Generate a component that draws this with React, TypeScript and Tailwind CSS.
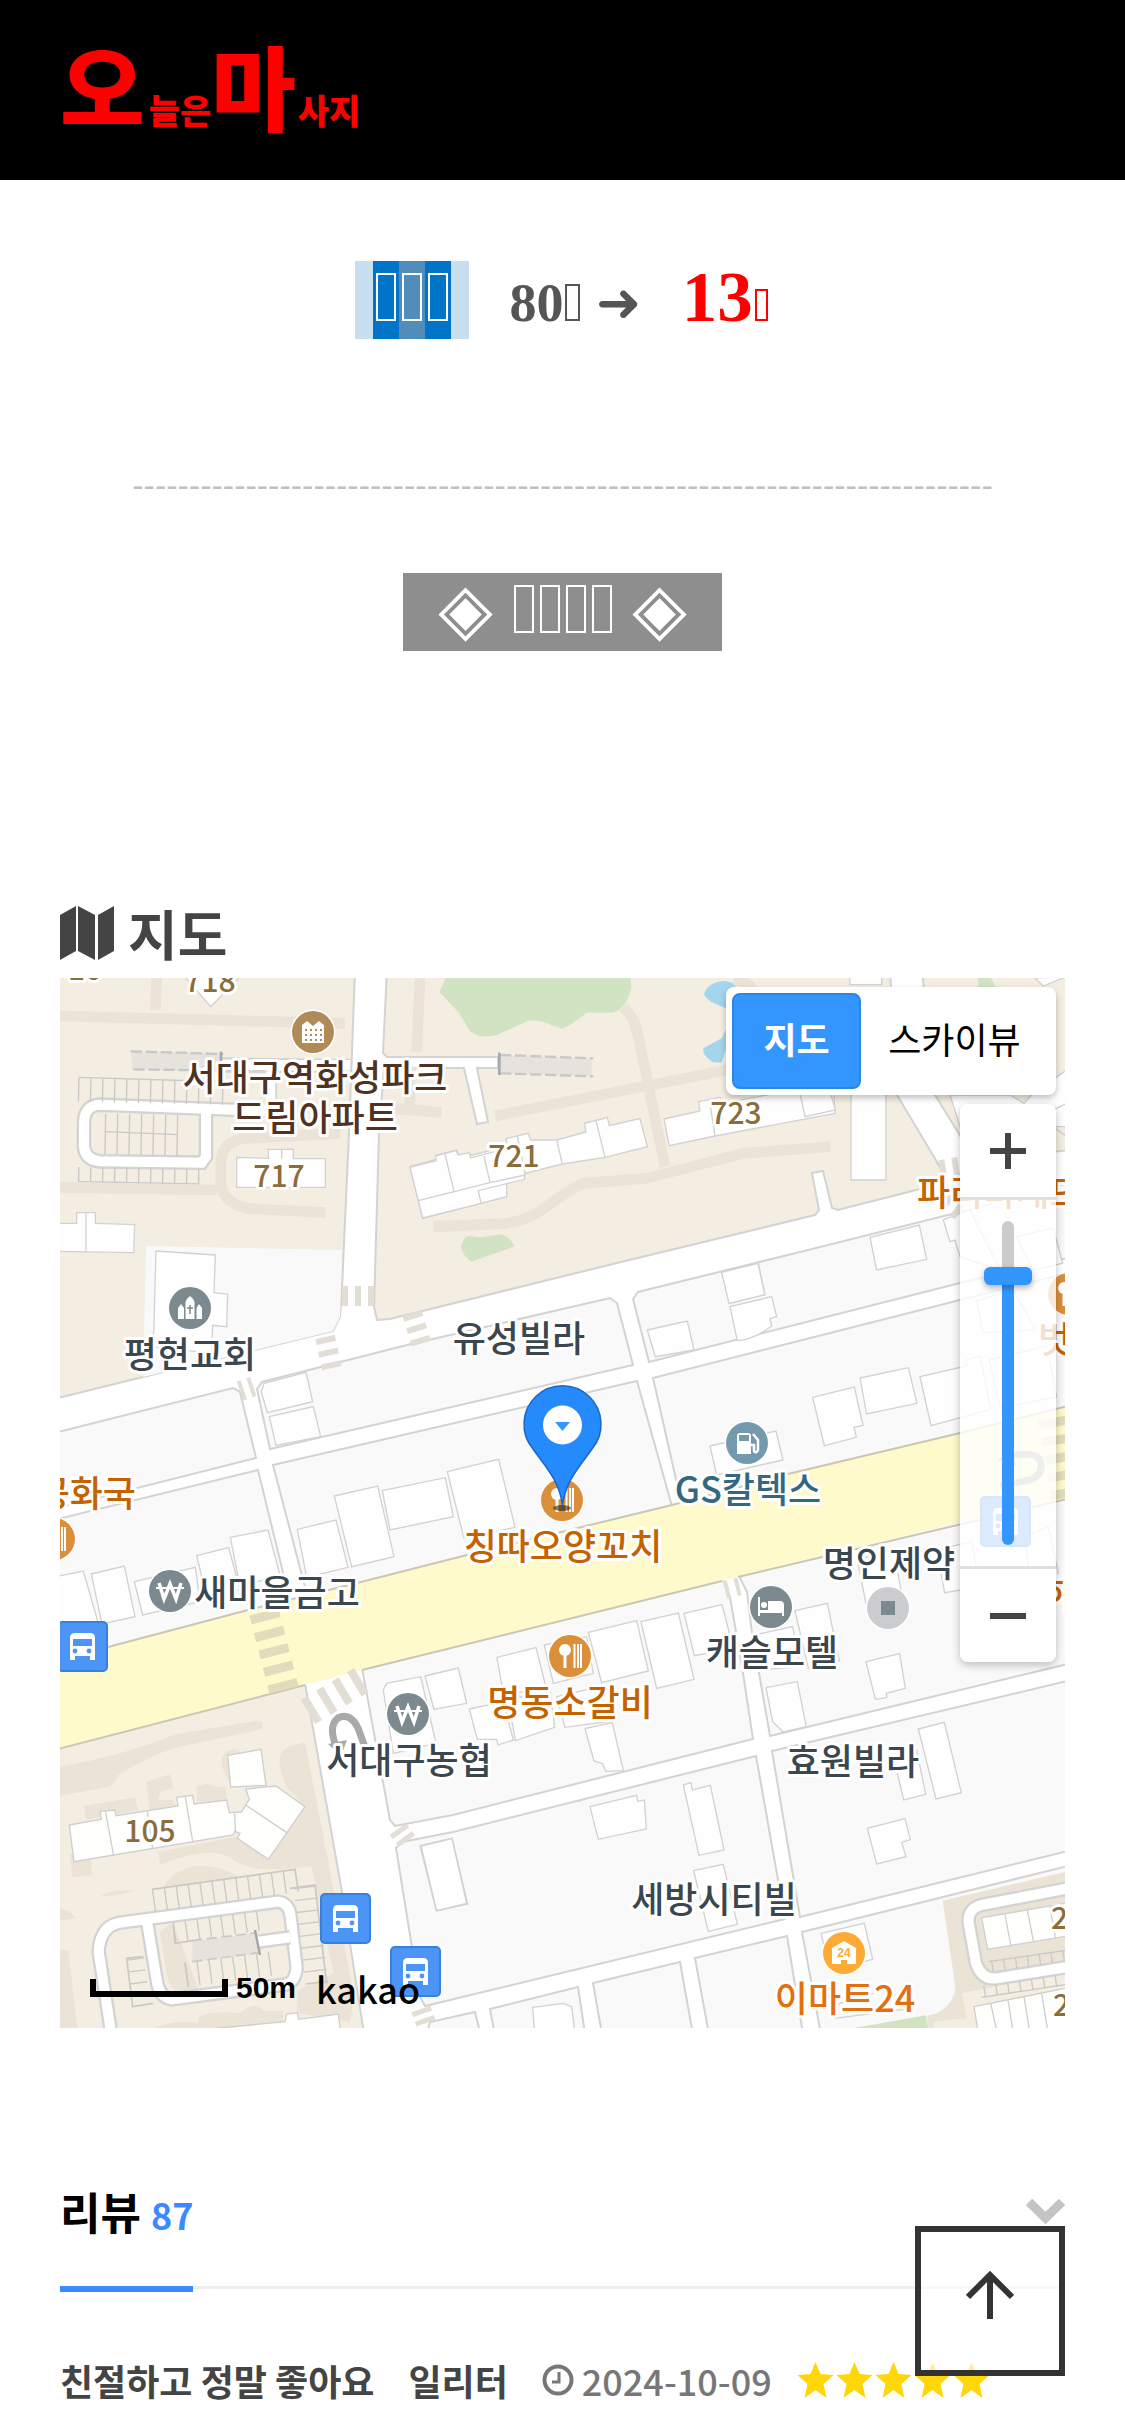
import { useState } from 'react';
import type { ReactNode } from 'react';

type Label = { text: string; x: number; y: number; color: string; size?: number; anchor?: 'start' | 'middle' | 'end' };

const BROWN = '#4f3222';
const OCHRE = '#8a6d3b';
const SLATE = '#3b474f';
const ORANGE = '#c46200';

const labels: Label[] = [
  { text: '10', x: 84, y: 979, color: OCHRE, size: 30 },
  { text: '718', x: 209, y: 991, color: OCHRE, size: 30 },
  { text: '717', x: 278, y: 1186, color: OCHRE, size: 30 },
  { text: '721', x: 513, y: 1166, color: OCHRE, size: 30 },
  { text: '723', x: 735, y: 1123, color: OCHRE, size: 30 },
  { text: '105', x: 149, y: 1841, color: OCHRE, size: 30 },
  { text: '201', x: 1050, y: 1928, color: OCHRE, size: 30, anchor: 'start' },
  { text: '202', x: 1052, y: 2015, color: OCHRE, size: 30, anchor: 'start' },
  { text: '서대구역화성파크', x: 314, y: 1090, color: BROWN },
  { text: '드림아파트', x: 314, y: 1130, color: BROWN },
  { text: '유성빌라', x: 518, y: 1351, color: SLATE },
  { text: '평현교회', x: 189, y: 1367, color: SLATE },
  { text: '새마을금고', x: 276, y: 1605, color: SLATE },
  { text: '명인제약', x: 888, y: 1576, color: SLATE },
  { text: '캐슬모텔', x: 771, y: 1665, color: SLATE },
  { text: '서대구농협', x: 408, y: 1773, color: SLATE },
  { text: '효원빌라', x: 852, y: 1774, color: SLATE },
  { text: '세방시티빌', x: 713, y: 1912, color: SLATE },
  { text: '공화국', x: 135, y: 1506, color: ORANGE, anchor: 'end' },
  { text: '파리바게뜨', x: 916, y: 1205, color: ORANGE, anchor: 'start' },
  { text: '벗', x: 1037, y: 1352, color: ORANGE, anchor: 'start' },
  { text: '하', x: 1041, y: 1605, color: ORANGE, anchor: 'start' },
  { text: '칭따오양꼬치', x: 562, y: 1559, color: ORANGE },
  { text: '명동소갈비', x: 569, y: 1715, color: ORANGE },
  { text: 'GS칼텍스', x: 747, y: 1502, color: '#34687f' },
  { text: '이마트24', x: 844, y: 2011, color: '#e3700f' },
];

// city blocks; whatever is left between them reads as street
const grayBlocks = [
  '50,1434 233,1388 240,1392 256,1458 50,1510',
  '50,1521 258,1470 290,1601 50,1680',
  '257,1389 262,1382 407,1345 610,1298 617,1303 633,1365 270,1449',
  '273,1465 637,1381 673,1510 311,1610',
  '633,1299 638,1292 800,1252 960,1212 1080,1180 1080,1255 960,1283 649,1362',
  '653,1378 960,1300 1080,1270 1080,1410 683,1510',
  '362,1668 722,1578 730,1597 743,1673 753,1739 453,1815 395,1826 390,1820',
  '738,1574 1080,1492 1080,1661 770,1736 752,1633 747,1592',
  '396,1848 402,1842 453,1832 756,1756 785,1919 425,2006 420,1997',
  '772,1751 1080,1678 1080,1848 800,1917',
  '425,2040 430,2022 475,2012 482,2040',
  '490,2009 578,1987 586,2040 496,2040',
  '593,1983 680,1962 694,2040 603,2040',
  '695,1958 787,1936 804,2040 710,2040',
  '802,1932 1080,1863 1080,2040 822,2040',
];

const sandBlocks = [
  '50,970 355,970 352,1053 349,1133 342,1288 340,1317 333,1331 143,1377 50,1400',
  '387,970 383,1053 387,1057 498,1057 498,1068 477,1068 488,1122 477,1124 464,1068 384,1068 379,1133 374,1307 377,1320 390,1319 617,1263 815,1215 819,1210 812,1173 823,1171 832,1208 838,1210 920,1189 943,1172 897,1095 890,970',
  '922,970 935,1095 975,1160 1080,1149 1080,970',
  '50,1740 305,1683 342,1892 365,2040 50,2040',
];

type Sheet = { x: number; y: number; walks?: string[]; houses?: string[]; lines?: string[] };

// detail sheets are surveyed at three units to the pixel
const sheets: Sheet[] = [
  {
    x: 40, y: 880,
    walks: ['M60 408 L915 430', 'M350 294 L346 390', 'M1140 294 L1130 515', 'M60 922 L530 930', 'M900 760 L620 775 Q545 780 542 850 V910 Q545 965 620 985 L857 998', 'M1110 560 V680', 'M1060 685 L1205 698', 'M1180 1038 H1260'],
    houses: [
      'M430 285 L512 380 L605 285 Z',
      'M590 832 L685 835 V808 H760 V836 H856 V922 H590 Z',
      'M50 1030 H110 V998 H166 V1030 L284 1034 L281 1118 L50 1114 Z',
      'M348 1113 L526 1125 L522 1238 L563 1242 L560 1340 L518 1336 L515 1420 L340 1400 Z',
      'M1110 860 L1190 838 L1188 826 L1250 810 L1260 834 L1400 800 V950 L1148 1015 Z',
    ],
    lines: ['M725 808 V836', 'M138 998 V1116', 'M1214 822 L1242 935', 'M1138 962 L1300 925'],
  },
  {
    x: 400, y: 960,
    walks: ['M285 468 L980 330', 'M670 140 Q705 175 715 230 L795 620', 'M102 800 L320 790 Q390 780 440 740 T550 670 L740 655 L1030 580 L1290 560', 'M1000 60 Q1040 60 1060 90'],
    houses: [
      'M30 622 L108 602 L106 588 L168 572 L175 585 L208 578 L212 594 L322 565 L318 536 L385 520 L392 540 L470 540 L558 516 L553 490 L622 473 L628 497 L720 476 L742 560 L615 592 L487 612 L375 640 L373 658 L235 692 L243 730 L68 774 Z',
      'M792 477 L900 453 L896 425 L960 412 L970 430 L1100 405 L1300 360 L1305 460 L945 528 L808 557 Z',
      'M966 937 L1075 910 L1095 1004 L988 1030 Z',
      'M990 1040 L1115 1010 L1130 1070 L1110 1076 L1115 1098 Q1060 1140 1012 1142 Z',
      'M742 1110 L862 1083 L882 1170 L766 1190 Z',
    ],
    lines: ['M135 582 L162 695', 'M252 588 L270 668', 'M55 722 L270 668 L375 645', 'M352 528 L375 640', 'M470 540 L487 612', 'M588 482 L615 592', 'M928 418 L945 528'],
  },
  {
    x: 720, y: 960,
    houses: [
      'M240 400 H332 L346 450 L255 470 Z', 'M393 400 H498 V660 H393 Z', 'M390 40 H485 V74 H390 Z', 'M450 832 L598 795 L620 898 L470 930 Z',
      'M5 937 L114 910 L134 1004 L27 1030 Z', 'M670 780 L750 750 L840 930 L720 890 L705 840 L690 845 Z', 'M890 830 L1000 805 L1028 910 L940 930 Z',
      'M690 405 L870 405 L912 430 L940 400 L1040 330 V500 L720 500 Z', 'M945 54 L970 78 L1040 50 Z', 'M770 1022 L880 990 L945 1110 L790 1118 Z',
    ],
    lines: ['M1040 430 L960 470 L1040 530'],
  },
  {
    x: 40, y: 1280,
    houses: [
      'M672 310 L798 277 L818 365 L682 398 L664 335 Z', 'M688 410 L820 380 L842 470 L708 496 Z',
      'M883 648 L1013 618 L1062 830 L935 860 Z', 'M1027 632 L1216 593 L1240 710 L1050 750 Z', 'M772 748 L888 720 L924 862 L800 892 Z',
      'M571 772 L684 750 L720 885 L600 920 Z', 'M470 827 L566 803 L600 930 L500 950 Z', 'M283 905 L466 862 L480 965 L308 1005 Z', 'M154 882 L253 858 L285 1010 L186 1032 Z', 'M40 892 L130 873 L175 1030 L60 1060 Z',
    ],
  },
  {
    x: 400, y: 1320,
    houses: [
      'M142 455 L296 418 L345 622 L192 655 Z', 'M930 378 L1128 333 L1149 420 L950 465 Z',
      'M565 937 L710 902 L745 1053 L605 1088 Z', 'M723 905 L835 879 L882 1078 L770 1105 Z', 'M852 880 L966 854 L1000 985 L883 1007 Z',
      'M291 1012 L408 983 L440 1110 L310 1120 Z', 'M433 975 L560 950 L580 1060 L460 1090 Z', 'M78 1068 L174 1045 L198 1148 L102 1168 Z', 'M-30 1090 L62 1072 L105 1265 L0 1280 Z',
      'M208 1167 L310 1145 L340 1260 L294 1275 L290 1258 H232 Z', 'M325 1140 L450 1110 L464 1222 L346 1262 Z', 'M470 1130 L600 1100 L620 1205 L495 1222 Z',
    ],
  },
  {
    x: 720, y: 1320,
    houses: [
      'M278 232 L403 201 L429 316 L402 322 L409 352 L313 377 Z', 'M420 174 L565 143 L591 250 L440 282 Z', 'M600 170 L740 138 L738 120 L780 108 L812 268 L633 317 Z', 'M808 120 L980 78 L1010 230 L842 265 Z',
      'M225 872 L322 850 L358 1022 L265 1045 Z', 'M100 946 L218 920 L240 1040 L120 1050 Z', 'M412 720 L520 690 L545 820 L438 850 Z', 'M650 690 L755 665 L780 800 L674 818 Z', 'M915 650 L985 620 L1015 760 L930 780 Z',
      'M438 1025 L539 1001 L556 1105 L499 1120 L500 1132 L466 1138 Z', 'M138 1103 L232 1085 L259 1220 L190 1236 L158 1205 Z',
    ],
  },
  {
    x: 400, y: 1660,
    houses: [
      'M555 206 L637 188 L670 332 L617 334 L608 311 L582 303 Z', 'M570 440 L710 406 L713 424 L733 420 L739 507 L595 538 Z', 'M850 375 L873 368 L877 390 L931 376 L972 570 L897 586 Z',
      'M881 632 L970 613 L1012 793 L925 814 Z', 'M60 557 L156 535 L203 732 L109 753 Z', 'M398 1042 L490 1030 L515 1040 L525 1120 H404 Z',
    ],
    lines: ['M535 424 L560 414', 'M745 368 L770 362'],
  },
  {
    x: 720, y: 1660,
    houses: [
      'M595 207 L673 187 L724 398 L648 417 Z', 'M520 290 L590 270 L617 403 L551 420 Z', 'M442 505 L555 476 L571 539 L545 547 L558 590 L470 612 Z',
      'M303 820 L433 790 L458 898 L330 930 Z',
    ],
    lines: ['M330 1040 L460 1000', 'M345 1075 L550 1048'],
  },
  {
    x: 40, y: 1640,
    houses: ['M1030 150 L1040 130 L1142 110 L1188 310 L1060 340 Z', 'M1155 108 L1255 84 L1280 190 L1182 208 Z', 'M1143 618 L1236 596 L1280 790 L1190 812 Z'],
  },
];

const Round = ({ x, y, fill, children }: { x: number; y: number; fill: string; children?: ReactNode }) => (
  <g transform={`translate(${x} ${y})`}>
    <circle r="22.5" fill="#fff" />
    <circle r="21" fill={fill} />
    {children}
  </g>
);

const Food = ({ x, y }: { x: number; y: number }) => (
  <Round x={x} y={y} fill="#da8f3a">
    <circle cx="-5" cy="-6" r="6" fill="#fff" />
    <path d="M-5 -4 V12" stroke="#fff" strokeWidth="3" />
    <path d="M4.5 -12 V12 M8 -12 V12 M11 -12 V12" stroke="#fff" strokeWidth="2" />
  </Round>
);

const Won = ({ x, y }: { x: number; y: number }) => (
  <Round x={x} y={y} fill="#7c898f">
    <path d="M-11 -8 L-6 8 L0 -7 L6 8 L11 -8" fill="none" stroke="#fff" strokeWidth="3.5" />
    <path d="M-14 -3 H14" stroke="#fff" strokeWidth="2" />
  </Round>
);

const Bus = ({ x, y }: { x: number; y: number }) => (
  <g transform={`translate(${x} ${y})`}>
    <rect x="1" y="1" width="49" height="49" rx="4" fill="#4c95f5" stroke="#3680de" strokeWidth="2" />
    <path d="M13 39 V17 Q13 12 18 12 H33 Q38 12 38 17 V39 H33 V35 H18 V39 Z" fill="#fff" />
    <rect x="16" y="18" width="19" height="7" fill="#4c95f5" />
    <circle cx="18" cy="30" r="2.4" fill="#4c95f5" />
    <circle cx="32" cy="30" r="2.4" fill="#4c95f5" />
  </g>
);

const Lane = ({ d, width = 36 }: { d: string; width?: number }) => (
  <>
    <path d={d} fill="none" stroke="#d3d3d3" strokeWidth={width + 8} />
    <path d={d} fill="none" stroke="#fff" strokeWidth={width - 6} />
  </>
);

const CityMap = () => (
  <svg viewBox="60 978 1005 1050" preserveAspectRatio="xMidYMid slice" className="block h-full w-full" role="img" aria-label="지도">
    <rect x="0" y="900" width="1200" height="1200" fill="#fff" />
    {sandBlocks.map((p) => <polygon key={p} points={p} fill="#f4ede1" stroke="#d3d3d3" strokeWidth="2" />)}
    <polygon points="146,1246 342,1250 340,1317 333,1331 143,1377" fill="#f9f9f9" />
    {grayBlocks.map((p) => <polygon key={p} points={p} fill="#f9f9f9" stroke="#d3d3d3" strokeWidth="2" />)}

    {/* greens and ponds */}
    <g transform="translate(400 960) scale(.33333)">
      <path d="M140 50 L118 95 L178 160 L210 213 Q240 240 295 223 L385 182 Q410 178 440 190 L485 206 Q505 202 560 158 H640 Q675 150 694 85 L692 50 Z" fill="#d1e3c2" />
      <path d="M183 860 Q188 835 205 828 L245 832 L305 823 Q335 835 342 860 L215 905 Q190 890 183 860 Z" fill="#d1e3c2" />
      <path d="M912 102 Q925 65 975 63 Q1010 68 1010 90 V150 L975 143 Q920 125 912 102 Z" fill="#a3d6ec" />
      <path d="M980 205 L965 235 L910 265 Q905 285 938 306 L965 308 L975 275 L1010 260 V200 Z" fill="#a3d6ec" />
      <path d="M1735 50 H1770 L1790 85 H1735 Z" fill="#d1e3c2" />
    </g>

    {/* estate in the south west corner */}
    <g transform="translate(40 1640) scale(.33333)">
      <g fill="#ebe3d6">
        <path d="M60 380 Q240 350 410 282 L650 242 Q675 245 665 268 L420 320 Q350 335 235 405 Q220 440 200 442 L60 467 Z" />
        <path d="M795 308 Q735 315 720 345 Q712 380 740 440 L795 500 L685 658 L590 590 L355 635 L360 675 Q520 610 580 660 Q640 705 815 678 L880 1000 L775 1050 L770 1120 L930 1145 Q945 1080 930 1000 Z" />
        <path d="M318 425 L390 403 L402 450 Q355 440 355 480 L400 480 L410 500 L330 515 Z" />
        <path d="M470 440 L500 432 Q540 445 555 440 L562 478 L470 485 Z" />
        <path d="M132 498 L285 472 L295 510 L138 540 Z" />
        <path d="M90 640 H150 L157 705 L97 712 Z" />
        <path d="M370 740 Q400 690 470 678 Q540 675 600 712 L340 748 Z" />
        <path d="M180 770 Q210 745 290 752 Q240 765 180 770 Z" />
        <path d="M60 805 Q100 815 108 835 L60 842 Z" />
        <path d="M60 930 L85 930 L112 1164 H60 Z" />
        <path d="M345 1164 Q390 1140 475 1150 V1130 Q530 1110 600 1120 Q640 1080 670 1112 H730 V1150 L480 1170 Z" />
        <path d="M545 350 Q570 315 600 335 L575 430 Q540 390 545 350 Z" />
        <path d="M360 880 Q370 860 400 850 L480 1060 Q390 1080 380 1000 Z" />
      </g>
      <Lane d="M212 1170 L176 935 Q180 850 255 846 L715 785 Q748 790 752 830 L770 985 Q765 1025 740 1033 L395 1078 Q355 1070 350 1020 L322 850" />
      <Lane d="M655 905 L750 892" />
      <path d="M457 905 L650 878 L660 940 L457 965 Z" fill="#e7e2dc" />
      <g fill="none" stroke="#c9c9c6" strokeWidth="5">
        <path d="M336 748 L765 688 L775 755 M400 850 L405 910 L460 902 M435 968 L445 1040 M310 950 L260 955 L278 1100 L340 1090 M750 745 L825 735 L860 1030" />
        <path d="M340 782 L765 722" strokeWidth="70" strokeDasharray="4 32" />
        <path d="M402 878 L660 842" strokeWidth="60" strokeDasharray="4 32" />
        <path d="M438 1005 L700 970" strokeWidth="72" strokeDasharray="4 32" />
        <path d="M795 740 L830 1030" strokeWidth="68" strokeDasharray="4 32" />
        <path d="M287 955 L305 1095" strokeWidth="50" strokeDasharray="4 32" />
        <path d="M457 902 L650 878 M457 965 L660 938" strokeDasharray="30 14" />
        <path d="M645 870 L660 945" stroke="#a5a5a5" strokeWidth="7" />
      </g>
      <g fill="#fefefd" stroke="#cfcfcf" strokeWidth="4">
        <path d="M563 346 L663 328 L678 436 L572 441 Z" />
        <path d="M88 555 L184 538 L180 514 L224 510 L228 527 L414 498 L410 472 L458 466 L462 492 L560 480 L568 518 L604 516 L628 478 L617 447 L708 438 L795 500 L685 658 L592 595 L600 580 L584 574 L580 585 L102 665 Z" />
        <path d="M196 512 L221 648 M436 470 L458 605 M584 520 L586 575 M617 495 L740 578 M322 515 L338 625" fill="none" />
        <path d="M480 1170 L735 1145 L740 1122 L772 1118 L776 1138 L895 1122 L902 1175 Z" />
      </g>
    </g>

    {/* estate in the south east corner */}
    <g transform="translate(720 1660) scale(.33333)">
      <path d="M668 722 L1060 630 V1120 H620 L622 1068 Q700 1050 706 980 Z" fill="#ebe3d6" />
      <path d="M725 1000 L1060 930 V1120 H640 V1085 L740 1075 Z" fill="#f4ede1" />
      <path d="M380 1108 L618 1066 L624 1120 H380 Z" fill="#d1e3c2" />
      <Lane d="M1060 682 L800 732 Q735 740 748 800 L768 910 Q785 960 830 955 L1060 918" />
      <g fill="#fefefd" stroke="#cfcfcf" strokeWidth="4">
        <path d="M785 773 L1060 726 V825 L803 868 Z M855 762 L872 855 M922 750 L940 843 M990 740 L1006 832" />
        <path d="M762 1040 L1060 980 V1120 H775 Z M812 1030 L832 1120 M864 1020 L880 1120 M912 1010 L930 1120 M965 1000 L982 1105" />
      </g>
      <g fill="none" stroke="#c9c9c6" strokeWidth="4">
        <path d="M806 905 L1060 868 M785 1012 L1060 970" />
        <path d="M815 918 L1060 885" strokeWidth="34" strokeDasharray="4 32" />
        <path d="M792 995 L1060 955" strokeWidth="34" strokeDasharray="4 32" />
      </g>
    </g>

    {/* car park in the north west */}
    <g transform="translate(40 880) scale(.33333)">
      <path d="M275 515 L545 520 V575 L275 568 Z" fill="#e7e2dc" />
      <path d="M272 514 L550 522 M280 568 L680 574" fill="none" stroke="#c6c8ca" strokeWidth="7" strokeDasharray="34 11" />
      <path d="M545 535 L930 540 M545 575 H680 M710 575 H925 M708 575 V690" fill="none" stroke="#d3d3d3" strokeWidth="6" />
      <path d="M545 540 H930 V570 H545 Z" fill="#fff" />
      <path d="M543 515 V560" stroke="#a5a9ac" strokeWidth="8" />
      <Lane d="M600 690 L180 674 Q132 676 132 730 V800 Q135 840 180 844 L485 848 L498 830 V700" />
      <path d="M692 575 V680 Q690 695 600 690" fill="none" stroke="#fff" strokeWidth="28" />
      <g fill="none" stroke="#c9c9c6" strokeWidth="4">
        <path d="M116 592 L580 606 M195 755 L412 764 M116 905 L476 912 M476 865 V912" />
        <path d="M114 630 L580 640" strokeWidth="70" strokeDasharray="4 32" />
        <path d="M194 762 L416 766" strokeWidth="122" strokeDasharray="4 32" />
        <path d="M114 884 L476 890" strokeWidth="46" strokeDasharray="4 32" />
      </g>
    </g>
    <g transform="translate(400 960) scale(.33333)">
      <path d="M300 287 L575 295 V347 L300 340 Z" fill="#e7e2dc" />
      <path d="M300 285 L580 295 M300 340 L580 349" fill="none" stroke="#c6c8ca" strokeWidth="7" strokeDasharray="34 11" />
      <path d="M298 278 V345" stroke="#a5a9ac" strokeWidth="8" />
    </g>

    {sheets.map((s) => (
      <g key={`${s.x}-${s.y}`} transform={`translate(${s.x} ${s.y}) scale(.33333)`}>
        {s.walks?.map((d) => <path key={d} d={d} fill="none" stroke="#ebe3d6" strokeWidth="32" />)}
        {s.houses?.map((d) => <path key={d} d={d} fill="#fefefe" stroke="#d2d2d2" strokeWidth="4" />)}
        {s.lines?.map((d) => <path key={d} d={d} fill="none" stroke="#d2d2d2" strokeWidth="4" />)}
      </g>
    ))}

    {/* main road */}
    <polygon points="50,1662 108,1647 248,1610 357,1583 467,1555 672,1505 788,1474 960,1433 1080,1403 1080,1496 960,1522 800,1561 738,1577 722,1581 460,1646 362,1670 305,1685 50,1751" fill="#fefacb" />
    <path d="M50 1662 L108 1647 L248 1610 L357 1583 L467 1555 L672 1505 L788 1474 L960 1433 L1080 1403 M50 1751 L305 1685 M362 1670 L722 1581 M738 1577 L1080 1496" fill="none" stroke="#cdc6b4" strokeWidth="2" />

    {/* crossings */}
    <g fill="none" stroke="#e2ddd5" strokeWidth="20" strokeDasharray="6 7">
      <path d="M342 1296 H374" />
      <path d="M325 1337 L332 1368" />
      <path d="M412 1313 L422 1346" />
      <path d="M240 1391 L258 1385" strokeDasharray="4 6" />
      <path d="M398 1829 L408 1843" strokeDasharray="5 5" />
      <path d="M421 2009 L427 2026" strokeDasharray="5 5" />
      <path d="M940 1170 L965 1166 M945 1200 L962 1212" />
      <path d="M725 1590 L741 1586" strokeDasharray="4 7" strokeWidth="18" />
    </g>
    <path d="M264 1612 L284 1690" fill="none" stroke="#e2dcbc" strokeWidth="30" strokeDasharray="9 9" />
    <path d="M1052 1418 L1066 1500" fill="none" stroke="#e2dcbc" strokeWidth="28" strokeDasharray="9 9" />
    <path d="M308 1712 L368 1676" fill="none" stroke="#e2ddd5" strokeWidth="28" strokeDasharray="8 10" />

    {/* u-turn arrows */}
    <path d="M366 1750 L358 1728 Q350 1712 338 1718 Q328 1726 336 1746" fill="none" stroke="#a9a9a9" strokeWidth="7" />
    <path d="M328 1744 L347 1740 L341 1756 Z" fill="#a9a9a9" />
    <path d="M1000 1486 L1030 1480 Q1045 1474 1040 1460 Q1034 1450 1005 1457" fill="none" stroke="#a9a9a9" strokeWidth="7" />
    <path d="M998 1460 L1012 1448 L1016 1466 Z" fill="#a9a9a9" />

    <Bus x={57} y={1621} />
    <Bus x={320} y={1893} />
    <Bus x={390} y={1946} />
    <Bus x={980} y={1496} />

    <Round x={313} y={1032} fill="#b08b58">
      <path d="M-11 -7 L-6 -11 L0 -6 L6 -11 L11 -7 V11 H-11 Z" fill="#fff" />
      <path d="M-8 -2 H9 M-8 3 H9 M-8 8 H9" stroke="#b08b58" strokeWidth="2" strokeDasharray="2 3" />
    </Round>
    <Round x={190} y={1308} fill="#7c898f">
      <path d="M-12 11 V0 L-9 -4 L-6 0 V11 Z M-4.500 11 V-6 Q-4 -9 0 -12 Q4 -9 4.500 -6 V11 Z M6.500 11 V0 L9 -4 L12 0 V11 Z" fill="#fff" />
      <path d="M0 -3 V6 M-3 0 H3" stroke="#7c898f" strokeWidth="1.500" />
    </Round>
    <Won x={170} y={1591} />
    <Won x={408} y={1714} />
    <Food x={562} y={1500} />
    <Food x={570} y={1656} />
    <Food x={54} y={1539} />
    <Food x={1069} y={1294} />
    <Round x={747} y={1443} fill="#7399ac">
      <path d="M-10 11 V-7 Q-10 -10 -7 -10 H1 Q4 -10 4 -7 V11 Z" fill="#fff" />
      <rect x="-8" y="-8" width="10" height="6" fill="#7399ac" />
      <path d="M4 2 H7 V8 Q9 11 11 7 V-3 L6 -9" fill="none" stroke="#fff" strokeWidth="2.500" />
    </Round>
    <Round x={771} y={1607} fill="#7c898f">
      <path d="M-13 -10 H-11 V3 H13 V9 H11 V6 H-11 V9 H-13 Z M-3 3 V-6 H9 Q13 -6 13 -2 V3 Z" fill="#fff" />
      <circle cx="-7" cy="-2" r="3" fill="#fff" />
    </Round>
    <Round x={888} y={1608} fill="#cbccd0">
      <rect x="-7" y="-7" width="14" height="14" fill="#7c898f" />
    </Round>
    <Round x={844} y={1953} fill="#fdab35">
      <path d="M-12 11 V-5 L0 -12 L12 -5 V11 H3 V7 H-3 V11 Z" fill="#fff" />
      <text y="4" textAnchor="middle" fontSize="12" fill="#fdab35" className="font-['Liberation_Sans',sans-serif] font-bold">24</text>
    </Round>

    <g transform="translate(1 1)">
      {labels.map((l) => (
        <text
          key={`${l.text}-${l.x}`}
          x={l.x}
          y={l.y}
          fill={l.color}
          fontSize={l.size ?? 36}
          textAnchor={l.anchor ?? 'middle'}
          stroke="#fff"
          strokeWidth="6"
          strokeLinejoin="round"
          paintOrder="stroke"
          className="font-['Noto_Sans_CJK_KR',sans-serif] font-medium"
        >
          {l.text}
        </text>
      ))}
    </g>

    {/* pin */}
    <ellipse cx="562" cy="1508" rx="9" ry="3" fill="#000" opacity=".5" />
    <path d="M562.500 1505 C559 1480 545 1466 533 1449 A38.500 38.500 0 1 1 592 1449 C580 1466 566 1480 562.500 1505 Z" fill="#258bfc" stroke="#1a66cc" strokeWidth="1.500" />
    <circle cx="562.500" cy="1425" r="19.500" fill="#fff" />
    <path d="M555 1422 H570 L562.500 1431 Z" fill="#3396ff" />
  </svg>
);

const MapPanel = () => {
  const [view, setView] = useState<'map' | 'sky'>('map');
  const [zoom, setZoom] = useState(85);

  return (
    <div className="relative h-[1050px] overflow-hidden font-['Noto_Sans_CJK_KR',sans-serif]">
      <CityMap />

      <div className="absolute top-[9px] right-[9px] flex h-[108px] items-stretch rounded-lg bg-white p-1.5 text-4xl shadow-[0_3px_6px_rgba(0,0,0,0.25)]">
        <button type="button" onClick={() => setView('map')} aria-pressed={view === 'map'} className="w-[129px] rounded-lg border-2 border-[#2e86e4] bg-[#3396ff] pb-1.5 font-bold text-white">
          지도
        </button>
        <button type="button" onClick={() => setView('sky')} aria-pressed={view === 'sky'} className="w-[189px] pr-0.5 pb-1.5 text-black">
          스카이뷰
        </button>
      </div>

      <div className="absolute top-[126px] right-[9px] w-24 overflow-hidden rounded-lg shadow-[0_3px_9px_rgba(0,0,0,0.25)]">
        <button type="button" aria-label="확대" onClick={() => setZoom(Math.min(100, zoom + 7))} className="flex h-24 w-full items-center justify-center border-b-[3px] border-[#e0e0e0] bg-white">
          <svg viewBox="0 0 36 36" className="size-9"><path d="M18 0 V36 M0 18 H36" stroke="#444" strokeWidth="6" /></svg>
        </button>
        <div className="flex h-[366px] items-center justify-center bg-white/80">
          <div className="relative h-[324px] w-12">
            <div className="mx-auto h-full w-3 rounded-full bg-[linear-gradient(#ccc_54px,#3396ff_54px)]" />
            <input
              type="range"
              aria-label="확대 수준"
              min={0}
              max={100}
              value={zoom}
              onChange={(e) => setZoom(Number(e.target.value))}
              className="absolute inset-0 h-full w-12 appearance-none bg-transparent [direction:rtl] [writing-mode:vertical-lr] [&::-webkit-slider-thumb]:h-[18px] [&::-webkit-slider-thumb]:w-12 [&::-webkit-slider-thumb]:appearance-none [&::-webkit-slider-thumb]:rounded-md [&::-webkit-slider-thumb]:bg-[#3396ff] [&::-webkit-slider-thumb]:shadow-[0_3px_6px_rgba(0,0,0,0.3)]"
            />
          </div>
        </div>
        <button type="button" aria-label="축소" onClick={() => setZoom(Math.max(0, zoom - 7))} className="flex h-24 w-full items-center justify-center border-t-[3px] border-[#e0e0e0] bg-white">
          <svg viewBox="0 0 36 36" className="size-9"><path d="M0 18 H36" stroke="#444" strokeWidth="6" /></svg>
        </button>
      </div>

      <div className="absolute bottom-5 left-[30px] flex items-center gap-2 text-black">
        <span className="h-[18px] w-[138px] border-x-[6px] border-b-[6px] border-black" />
        <span className="font-['Liberation_Sans',sans-serif] text-3xl font-bold">50m</span>
        <a href="#kakao" className="ml-3 font-['Noto_Sans_CJK_KR',sans-serif] text-4xl font-medium">kakao</a>
      </div>
    </div>
  );
};

const boxSizes = {
  lg: 'mx-[3px] h-12 w-5',
  md: 'mx-0.5 h-[37px] w-[15px]',
  sm: 'mx-0.5 h-8 w-[13px]',
};

// hollow box standing on the baseline, one per character
const Box = ({ size = 'lg' }: { size?: keyof typeof boxSizes }) => (
  <span className={`inline-block border-2 border-current ${boxSizes[size]}`} />
);

const Star = () => (
  <svg viewBox="0 0 36 36" className="h-9 w-[39px]">
    <path d="M18 0 L23 12 L36 13 L26 22 L29 36 L18 28 L7 36 L10 22 L0 13 L13 12 Z" fill="#ffd608" />
  </svg>
);

const App = () => (
  <div className="bg-white pb-9 font-['Noto_Sans_CJK_KR',sans-serif] text-[#444]">
    <header className="flex h-[180px] items-center bg-black px-15 pb-3">
      <a href="#home" className="flex items-baseline font-black text-[#ff0000]">
        <span className="text-[92px] leading-none">오</span>
        <span className="ml-1 text-[34px] leading-none">늘은</span>
        <span className="text-[92px] leading-none">마</span>
        <span className="ml-0.5 text-[34px] leading-none">사지</span>
      </a>
    </header>

    <main className="px-15">
      {/* price */}
      <section className="pt-[81px] text-center font-['Liberation_Serif','DejaVu_Sans',serif] font-bold">
        <p className="text-[71px] leading-[72px] whitespace-pre text-white">
          <span className="inline-block h-[78px] bg-[#c9dff0]"> </span>
          <span className="inline-block h-[78px] bg-[#0074c9]"><Box /></span>
          <span className="inline-block h-[78px] bg-[#518dba]"><Box /></span>
          <span className="inline-block h-[78px] bg-[#0074c9]"><Box /></span>
          <span className="inline-block h-[78px] bg-[#c9dff0]"> </span>
          <span className="text-[54px] leading-none text-[#555]">{'   80'}<Box size="md" />{' ➜   '}</span>
          <span className="leading-none text-[#ff0000]">13<Box size="sm" /></span>
        </p>
        <p className="mt-[122px] font-['Liberation_Sans',sans-serif] text-[34px] leading-[48px] font-normal whitespace-nowrap text-[#c0c0c0]">
          {'-'.repeat(76)}
        </p>
        <p className="mt-16 text-[71px] leading-[72px] whitespace-pre text-white">
          <span className="inline-block h-[78px] bg-[#8e8e8e]">{'  ◈ '}<Box /><Box /><Box /><Box />{' ◈  '}</span>
        </p>
      </section>

      {/* map */}
      <section className="mt-[253px]">
        <h2 className="mb-4 flex items-center gap-3.5 text-[54px] leading-[58px] font-bold">
          <svg viewBox="0 0 54 54" className="size-[54px]">
            <path d="M0 9 L16 0 V45 L0 54 Z M18 0 L35 9 V54 L18 45 Z M38 9 L54 0 V45 L38 54 Z" fill="#444" />
          </svg>
          지도
        </h2>
        <MapPanel />
      </section>

      {/* reviews */}
      <section className="mt-[152px]">
        <div className="flex h-[109px] items-start justify-between border-b-[3px] border-[#eee]">
          <h2 className="h-[112px] border-b-[6px] border-[#3b8aff] text-[44px] leading-[62px] font-bold text-black">
            리뷰 <span className="text-4xl text-[#3b8aff]">87</span>
          </h2>
          <button type="button" aria-label="펼치기" className="mt-[18px]">
            <svg viewBox="0 0 39 27" className="h-[27px] w-[39px]"><path d="M3 4 L19.500 20 L36 4" fill="none" stroke="#c4c4c4" strokeWidth="9" /></svg>
          </button>
        </div>

        <article className="mt-16 flex items-center text-4xl leading-[54px] font-bold">
          <h3>친절하고 정말 좋아요</h3>
          <span className="ml-[34px]">일리터</span>
          <time className="ml-[34px] flex items-center gap-2 font-medium text-[#777]">
            <svg viewBox="0 0 32 32" className="size-8" fill="none" stroke="#777" strokeWidth="4">
              <circle cx="16" cy="16" r="13.500" />
              <path d="M17 8 V18 H10" strokeWidth="3" />
            </svg>
            2024-10-09
          </time>
          <span className="ml-6 flex" aria-label="별점 5점">
            {[1, 2, 3, 4, 5].map((n) => <Star key={n} />)}
          </span>
        </article>
      </section>
    </main>

    <button type="button" aria-label="맨 위로" className="fixed right-15 bottom-15 flex size-[150px] items-center justify-center border-[6px] border-[#333] bg-white/60 pb-3">
      <svg viewBox="0 0 48 48" className="size-12" fill="none" stroke="#333" strokeWidth="6"><path d="M24 48 V5 M2 26 L24 4 L46 26" /></svg>
    </button>
  </div>
);

export default App;
